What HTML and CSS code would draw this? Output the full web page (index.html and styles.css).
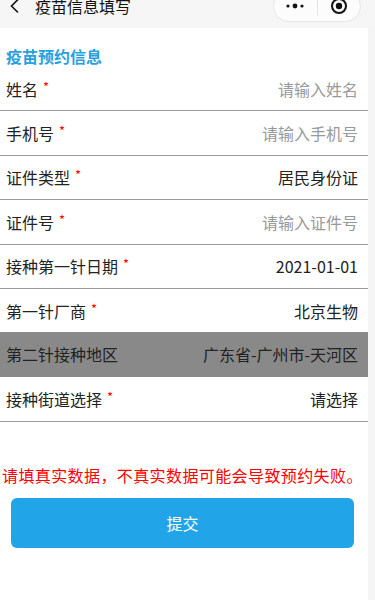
FILE: index.html
```html
<!DOCTYPE html>
<html lang="zh-CN">
<head>
<meta charset="utf-8">
<link rel="stylesheet" href="styles.css">
</head>
<body>
<header class="nav">
  <div class="nav-left">
    <svg class="back" width="12" height="16" viewBox="0 0 12 16"><polyline points="9,1.5 2.5,8 9,14.5" fill="none" stroke="#111" stroke-width="1.6"/></svg>
    <span class="nav-title">疫苗信息填写</span>
  </div>
  <div class="capsule">
    <span class="cap-btn">
      <svg width="20" height="6" viewBox="0 0 20 6"><circle cx="3" cy="3" r="1.6" fill="#111"/><circle cx="10" cy="3" r="2.4" fill="#111"/><circle cx="17" cy="3" r="1.6" fill="#111"/></svg>
    </span>
    <span class="cap-sep"></span>
    <span class="cap-btn">
      <svg width="18" height="18" viewBox="0 0 18 18"><circle cx="9" cy="9" r="7" fill="none" stroke="#111" stroke-width="2"/><circle cx="9" cy="9" r="3.2" fill="#111"/></svg>
    </span>
  </div>
</header>
<main class="page">
  <h2 class="section-title">疫苗预约信息</h2>
  <div class="form">
    <div class="row"><span class="label">姓名<i class="req">*</i></span><span class="ph">请输入姓名</span></div>
    <div class="row"><span class="label">手机号<i class="req">*</i></span><span class="ph">请输入手机号</span></div>
    <div class="row"><span class="label">证件类型<i class="req">*</i></span><span class="val">居民身份证</span></div>
    <div class="row"><span class="label">证件号<i class="req">*</i></span><span class="ph">请输入证件号</span></div>
    <div class="row"><span class="label">接种第一针日期<i class="req">*</i></span><span class="val">2021-01-01</span></div>
    <div class="row"><span class="label">第一针厂商<i class="req">*</i></span><span class="val">北京生物</span></div>
    <div class="row row-active"><span class="label">第二针接种地区</span><span class="val">广东省-广州市-天河区</span></div>
    <div class="row"><span class="label">接种街道选择<i class="req">*</i></span><span class="val">请选择</span></div>
  </div>
  <p class="warn">请填真实数据，不真实数据可能会导致预约失败。</p>
  <div class="btn-wrap"><button class="submit">提交</button></div>
</main>
</body>
</html>
```
FILE: styles.css
```css
html, body {
  margin: 0;
  padding: 0;
}
body {
  background: #f5f5f5;
  font-family: "Noto Sans CJK SC", "Noto Sans", sans-serif;
  color: #222;
  width: 375px;
  height: 600px;
  overflow: hidden;
}
.nav {
  height: 44px;
  margin-top: -16px;
  display: flex;
  align-items: center;
  justify-content: space-between;
  padding: 0 14px 0 9px;
  background: #f6f6f6;
  box-sizing: border-box;
  width: 375px;
}
.nav-left {
  display: flex;
  align-items: center;
  gap: 14px;
}
.back { display: block; }
.nav-title {
  font-size: 16px;
  line-height: 20px;
  color: #111;
}
.capsule {
  display: flex;
  align-items: center;
  height: 31px;
  width: 88px;
  box-sizing: border-box;
  border: 1px solid #e6e6e6;
  border-radius: 16px;
  background: rgba(255,255,255,0.7);
}
.cap-btn {
  flex: 1;
  display: flex;
  justify-content: center;
  align-items: center;
}
.cap-sep {
  width: 1px;
  height: 18px;
  background: #e6e6e6;
}
.page {
  width: 368px;
  height: 572px;
  background: #fff;
}
.section-title {
  margin: 0;
  padding: 17px 0 0 6px;
  height: 39px;
  box-sizing: border-box;
  font-size: 16px;
  line-height: 22px;
  font-weight: bold;
  color: #2a9fe0;
}
.row {
  height: 44.4px;
  box-sizing: border-box;
  border-bottom: 1px solid #9a9a9a;
  display: flex;
  align-items: center;
  justify-content: space-between;
  padding: 0 10px 0 6px;
  font-size: 16px;
}
.row-active {
  background: #898989;
  border-bottom-color: #898989;
  height: 45px;
  margin-top: -1px;
}
.label { color: #222; }
.req {
  font-style: normal;
  color: #f00;
  font-size: 13px;
  margin-left: 5px;
  position: relative;
  top: -4px;
}
.ph { color: #999; }
.val { color: #222; }
.warn {
  margin: 42px 0 0 0;
  padding-left: 2px;
  font-size: 16px;
  line-height: 22px;
  letter-spacing: 0.4px;
  color: #f00;
  white-space: nowrap;
}
.btn-wrap {
  padding: 12px 0 0 11px;
}
.submit {
  display: block;
  width: 343px;
  height: 50px;
  border: none;
  border-radius: 6px;
  background: #22a4e8;
  color: #fff;
  font-family: "Noto Sans CJK SC", sans-serif;
  font-size: 16px;
}
```
